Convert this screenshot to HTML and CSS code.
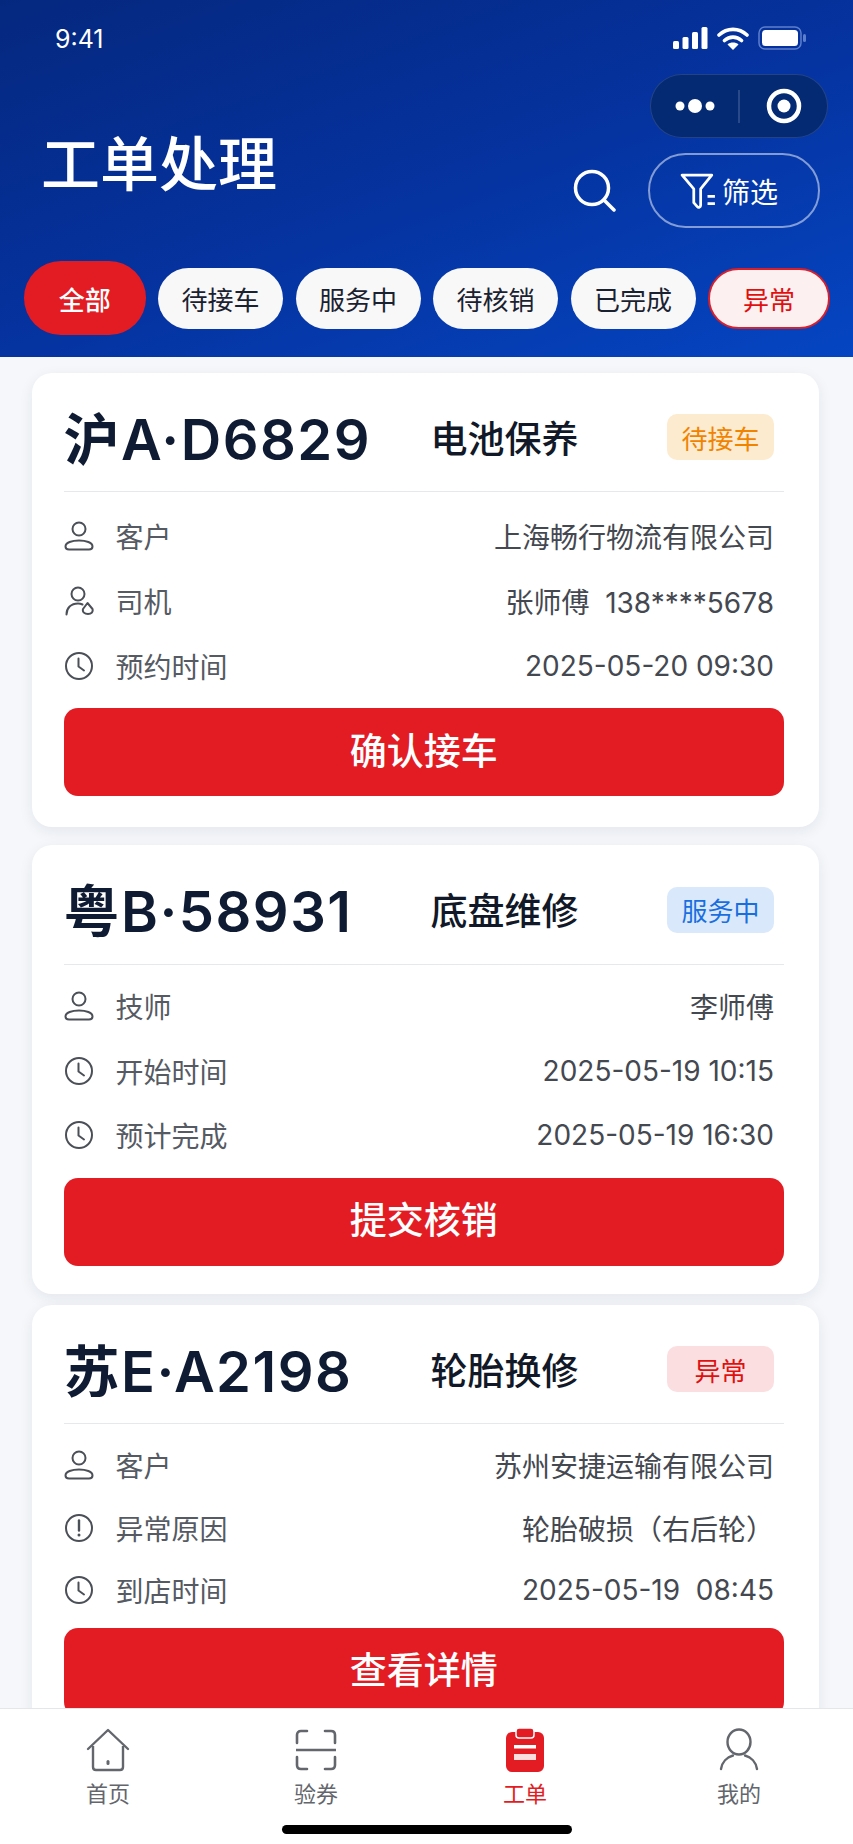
FILE: index.html
```html
<!DOCTYPE html>
<html lang="zh-CN">
<head>
<meta charset="utf-8">
<title>工单处理</title>
<link rel="stylesheet" href="styles.css">
</head>
<body>
<svg class="defs" width="0" height="0" aria-hidden="true">
  <symbol id="i-user" viewBox="0 0 30 30"><circle cx="15" cy="8" r="6.500" fill="none" stroke="currentColor" stroke-width="2"/><path d="M5 28.500h20c2 0 3.500-1 3.500-3 0-4-6.500-6-13.500-6s-13.500 2-13.500 6c0 2 1.500 3 3.500 3z" fill="none" stroke="currentColor" stroke-width="2"/></symbol>
  <symbol id="i-driver" viewBox="0 0 30 30"><circle cx="14" cy="8" r="6.500" fill="none" stroke="currentColor" stroke-width="2"/><path d="M2.500 28.500c0-6.500 4.500-11 11.500-11 1.800 0 3 .3 4.500 1" fill="none" stroke="currentColor" stroke-width="2" stroke-linecap="round"/><path d="M23.500 17l5 6c.8 2.800-1 5-4.500 5s-5.800-2-5-5z" fill="none" stroke="currentColor" stroke-width="2" stroke-linejoin="round"/></symbol>
  <symbol id="i-clock" viewBox="0 0 30 30"><circle cx="15" cy="15" r="13" fill="none" stroke="currentColor" stroke-width="2"/><path d="M14.500 7.500v8l5.500 4" fill="none" stroke="currentColor" stroke-width="2" stroke-linecap="round" stroke-linejoin="round"/></symbol>
  <symbol id="i-alert" viewBox="0 0 30 30"><circle cx="15" cy="15" r="13" fill="none" stroke="currentColor" stroke-width="2"/><path d="M15 7.500v10" fill="none" stroke="currentColor" stroke-width="2.400" stroke-linecap="round"/><circle cx="15" cy="22" r="1.500" fill="currentColor"/></symbol>
</svg>
<div class="app">
  <header class="header">
    <div class="status">
      <span class="time">9:41</span>
      <div class="status-icons">
        <svg class="ic-signal" viewBox="0 0 35 22"><rect x="0" y="14" width="6" height="8" rx="1.500"/><rect x="9.500" y="10" width="6" height="12" rx="1.500"/><rect x="19" y="5" width="6" height="17" rx="1.500"/><rect x="28.500" y="0" width="6" height="22" rx="1.500"/></svg>
        <svg class="ic-wifi" viewBox="0 0 32 24"><path d="M2 9c8-7.500 20-7.500 28 0M7.500 14.500c5-4.500 12-4.500 17 0" fill="none" stroke="#fff" stroke-width="3.600" stroke-linecap="round"/><path d="M16 24l-5.500-5.500c3-2.600 8-2.600 11 0z" fill="#fff"/></svg>
        <svg class="ic-battery" viewBox="0 0 48 24"><rect x="1" y="1" width="42" height="22" rx="6" fill="none" stroke="#5c7fcc" stroke-width="1.500"/><rect x="4" y="4" width="36" height="16" rx="3.500" fill="#fff"/><rect x="45" y="8" width="3" height="8" rx="1.500" fill="#5c7fcc"/></svg>
      </div>
    </div>
    <div class="top">
      <h1 class="title">工单处理</h1>
      <div class="top-right">
        <div class="capsule">
          <svg class="capsule-svg" viewBox="0 0 178 64"><circle cx="30" cy="32" r="4.500" fill="#fff"/><circle cx="45" cy="32" r="7" fill="#fff"/><circle cx="60" cy="32" r="4.500" fill="#fff"/><path d="M89 16v33" stroke="#fff" stroke-opacity=".2" stroke-width="1.500"/><circle cx="134" cy="32" r="15" fill="none" stroke="#fff" stroke-width="4.500"/><circle cx="134" cy="32" r="6.500" fill="#fff"/></svg>
        </div>
        <div class="actions">
          <svg class="ic-search" viewBox="0 0 43 43"><circle cx="19" cy="19" r="16.500" fill="none" stroke="#fff" stroke-width="3.500"/><path d="M31 31l10 10" stroke="#fff" stroke-width="3.500" stroke-linecap="round"/></svg>
          <div class="filter">
            <svg class="ic-funnel" viewBox="0 0 34 34"><path d="M2 2h28l-10.500 13v15.500c0 1.800-2 2.500-3.200 1.200l-3.300-3.700V15z" fill="none" stroke="#fff" stroke-width="2.600" stroke-linejoin="round"/><path d="M26 22h7M26 29h7" stroke="#fff" stroke-width="2.600"/></svg>
            <span>筛选</span>
          </div>
        </div>
      </div>
    </div>
    <nav class="pills">
      <span class="pill pill-active">全部</span>
      <span class="pill">待接车</span>
      <span class="pill">服务中</span>
      <span class="pill">待核销</span>
      <span class="pill">已完成</span>
      <span class="pill pill-alert">异常</span>
    </nav>
  </header>

  <main class="list">
    <article class="card card-a">
      <div class="card-head">
        <span class="plate">沪A·D6829</span>
        <span class="kind">电池保养</span>
        <span class="badge badge-wait">待接车</span>
      </div>
      <div class="rows">
        <div class="row"><svg class="ic"><use href="#i-user"/></svg><span class="label">客户</span><span class="value">上海畅行物流有限公司</span></div>
        <div class="row"><svg class="ic"><use href="#i-driver"/></svg><span class="label">司机</span><span class="value">张师傅&nbsp;&nbsp;138****5678</span></div>
        <div class="row"><svg class="ic"><use href="#i-clock"/></svg><span class="label">预约时间</span><span class="value">2025-05-20 09:30</span></div>
      </div>
      <button class="cta">确认接车</button>
    </article>

    <article class="card card-b">
      <div class="card-head">
        <span class="plate">粤B·58931</span>
        <span class="kind">底盘维修</span>
        <span class="badge badge-serve">服务中</span>
      </div>
      <div class="rows">
        <div class="row"><svg class="ic"><use href="#i-user"/></svg><span class="label">技师</span><span class="value">李师傅</span></div>
        <div class="row"><svg class="ic"><use href="#i-clock"/></svg><span class="label">开始时间</span><span class="value">2025-05-19 10:15</span></div>
        <div class="row"><svg class="ic"><use href="#i-clock"/></svg><span class="label">预计完成</span><span class="value">2025-05-19 16:30</span></div>
      </div>
      <button class="cta">提交核销</button>
    </article>

    <article class="card card-c">
      <div class="card-head">
        <span class="plate">苏E·A2198</span>
        <span class="kind">轮胎换修</span>
        <span class="badge badge-error">异常</span>
      </div>
      <div class="rows">
        <div class="row"><svg class="ic"><use href="#i-user"/></svg><span class="label">客户</span><span class="value">苏州安捷运输有限公司</span></div>
        <div class="row"><svg class="ic"><use href="#i-alert"/></svg><span class="label">异常原因</span><span class="value">轮胎破损（右后轮）</span></div>
        <div class="row"><svg class="ic"><use href="#i-clock"/></svg><span class="label">到店时间</span><span class="value">2025-05-19&nbsp;&nbsp;08:45</span></div>
      </div>
      <button class="cta">查看详情</button>
    </article>
  </main>

  <footer class="tabbar">
    <div class="tabs">
      <div class="tab">
        <svg class="tab-ic" viewBox="0 0 44 44"><path d="M2 21L22 2l20 19" fill="none" stroke="currentColor" stroke-width="2.400" stroke-linecap="round" stroke-linejoin="round"/><path d="M7 18v21c0 2 1 3 3 3h24c2 0 3-1 3-3V18" fill="none" stroke="currentColor" stroke-width="2.400"/><rect x="20.500" y="32" width="3" height="5" rx="1.500" fill="currentColor"/></svg>
        <span>首页</span>
      </div>
      <div class="tab">
        <svg class="tab-ic" viewBox="0 0 44 44"><path d="M13 3H7C4.500 3 3 4.500 3 7v8M31 3h6c2.500 0 4 1.500 4 4v8M3 29v8c0 2.500 1.500 4 4 4h6M41 29v8c0 2.500-1.500 4-4 4h-6" fill="none" stroke="currentColor" stroke-width="2.600" stroke-linecap="round"/><path d="M2 22h40" stroke="currentColor" stroke-width="2.600"/></svg>
        <span>验券</span>
      </div>
      <div class="tab tab-on">
        <svg class="tab-ic" viewBox="0 0 44 44"><rect x="3" y="4" width="38" height="40" rx="6" fill="currentColor"/><rect x="13" y="0" width="18" height="10" rx="3" fill="currentColor" stroke="#fff" stroke-width="1.500"/><rect x="11" y="17" width="22" height="3.500" fill="#fff"/><rect x="11" y="26" width="22" height="6" fill="#fff" fill-opacity=".85"/></svg>
        <span>工单</span>
      </div>
      <div class="tab">
        <svg class="tab-ic" viewBox="0 0 44 44"><ellipse cx="22" cy="14" rx="11.500" ry="12.500" fill="none" stroke="currentColor" stroke-width="2.400"/><path d="M4 41c1-7 6-12 12-13.500M40 41c-1-7-6-12-12-13.500" fill="none" stroke="currentColor" stroke-width="2.400" stroke-linecap="round"/></svg>
        <span>我的</span>
      </div>
    </div>
    <div class="home-bar"></div>
  </footer>
</div>
</body>
</html>
```
FILE: styles.css
```css
* { box-sizing: border-box; }
html, body { margin: 0; padding: 0; }
body {
  font-family: "Inter", "Noto Sans CJK SC", sans-serif;
  background: #f5f7fa;
  color: #0f1b33;
}
.defs { display: block; height: 0; }
.app {
  width: 853px;
  height: 1844px;
  display: flex;
  flex-direction: column;
  overflow: hidden;
}

/* Header */
.header {
  height: 357px;
  flex: none;
  background: linear-gradient(160deg, #05287f 0%, #05329e 50%, #0545c2 100%);
  color: #fff;
}
.status {
  height: 74px;
  padding: 26px 47px 0 55px;
  display: flex;
  justify-content: space-between;
  align-items: flex-start;
}
.time { font-family: "Inter", sans-serif; font-size: 25px; line-height: 26px; font-weight: 400; }
.status-icons { display: flex; align-items: center; gap: 9px; }
.ic-signal { width: 35px; height: 22px; fill: #fff; }
.ic-wifi { width: 32px; height: 24px; }
.ic-battery { width: 48px; height: 24px; }

.top {
  height: 154px;
  display: flex;
  justify-content: space-between;
  padding: 0 25px 0 41px;
}
.title {
  margin: 53px 0 0;
  font-family: "Noto Sans CJK SC", sans-serif;
  font-size: 59px;
  line-height: 68px;
  font-weight: 500;
  height: 68px;
}
.top-right { display: flex; flex-direction: column; align-items: flex-end; }
.capsule {
  width: 178px;
  height: 64px;
  border-radius: 32px;
  background: #052a74;
  border: 1px solid rgba(255, 255, 255, .12);
  overflow: hidden;
}
.capsule-svg { display: block; width: 178px; height: 64px; margin: -1px; }
.actions { display: flex; align-items: center; gap: 32px; margin-top: 15px; margin-right: 8px; }
.ic-search { width: 43px; height: 43px; }
.filter {
  width: 172px;
  height: 75px;
  border: 2px solid rgba(255, 255, 255, .5);
  border-radius: 38px;
  display: flex;
  align-items: center;
  gap: 6px;
  padding-left: 30px;
  font-family: "Noto Sans CJK SC", sans-serif;
  font-size: 28px;
}
.ic-funnel { width: 36px; height: 36px; }

.pills {
  display: flex;
  align-items: center;
  gap: 12.500px;
  margin-top: 33px;
  padding-left: 24px;
}
.pill {
  width: 125px;
  height: 61px;
  border-radius: 31px;
  background: #f8f8f8;
  color: #1a2130;
  display: flex;
  align-items: center;
  justify-content: center;
  font-family: "Noto Sans CJK SC", sans-serif;
  font-size: 26px;
}
.pill-active { width: 121.500px; height: 74px; border-radius: 37px; background: #e31c24; color: #fff; font-weight: 500; }
.pill-alert { width: 122px; background: #fdf0f0; color: #e01010; border: 2px solid #d81f2c; }

/* List */
.list {
  flex: 1;
  min-height: 0;
  overflow: hidden;
  padding: 16px 34px 0 32px;
}
.card {
  background: #fff;
  border-radius: 20px;
  box-shadow: 0 4px 14px rgba(20, 40, 80, .08);
  padding: 0 35px 0 31.500px;
}
.card-a { height: 454px; }
.card-b { height: 449px; margin-top: 18px; }
.card-c { height: 460px; margin-top: 11px; }
.card-head {
  height: 119px;
  padding-top: 6px;
  border-bottom: 1px solid #e6e8ec;
  display: flex;
  align-items: center;
}
.card-b .card-head { height: 120px; }
.plate {
  width: 367px;
  flex: none;
  font-size: 56px;
  letter-spacing: 1.500px;
  font-weight: 600;
  color: #0f1b33;
  font-family: "Inter", "Noto Sans CJK SC", sans-serif;
  white-space: nowrap;
}
.kind {
  font-family: "Noto Sans CJK SC", sans-serif;
  font-size: 37px;
  font-weight: 500;
  color: #111827;
  width: 236.500px;
  flex: none;
  margin-top: 3px;
}
.badge {
  width: 107px;
  height: 46px;
  border-radius: 10px;
  display: flex;
  align-items: center;
  justify-content: center;
  font-family: "Noto Sans CJK SC", sans-serif;
  font-size: 26px;
  margin-top: 4px;
}
.badge-wait { background: #fdebd0; color: #f08300; }
.badge-serve { background: #d9e9fb; color: #1a6fe0; }
.badge-error { background: #fbdfe0; color: #e01010; }

.rows { margin-top: 11px; }
.row {
  height: 65px;
  display: flex;
  align-items: center;
  font-family: "Inter", "Noto Sans CJK SC", sans-serif;
  font-size: 28px;
}
.card-b .rows { margin-top: 9px; }
.card-b .row { height: 64.500px; }
.card-c .rows { margin-top: 10px; }
.card-c .row { height: 62.500px; }
.ic { width: 30px; height: 30px; color: #4b4f57; flex: none; margin-right: 22px; }
.label { color: #555a63; }
.value { margin-left: auto; margin-right: 10px; color: #444850; }
.cta {
  display: block;
  width: 100%;
  height: 88px;
  margin-top: 10px;
  padding: 0 0 7px;
  border: 0;
  border-radius: 14px;
  background: #e31c24;
  color: #fff;
  font-family: "Noto Sans CJK SC", sans-serif;
  font-size: 37px;
  font-weight: 500;
}
.card-c .cta { margin-top: 6px; }

/* Tab bar */
.tabbar {
  height: 136px;
  flex: none;
  background: #fff;
  border-top: 1px solid #e4e6ea;
  display: flex;
  flex-direction: column;
}
.tabs {
  display: grid;
  grid-template-columns: 216px 200px 218px 210px;
  padding: 19px 0 0;
}
.tab {
  display: flex;
  flex-direction: column;
  align-items: center;
  gap: 5px;
  color: #63666c;
  font-family: "Noto Sans CJK SC", sans-serif;
  font-size: 22px;
  line-height: 30px;
}
.tab-on { color: #e31c24; }
.tab-ic { width: 44px; height: 44px; }
.home-bar {
  width: 290px;
  height: 9px;
  border-radius: 5px;
  background: #000;
  margin: 18px auto 0;
}
```
